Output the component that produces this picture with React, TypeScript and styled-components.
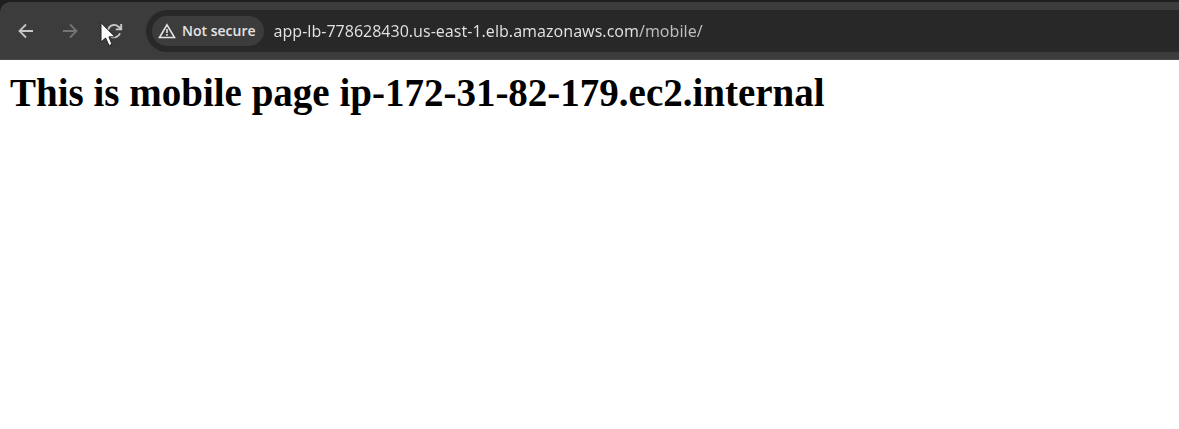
import React from "react";
import styled, { createGlobalStyle } from "styled-components";

const GlobalStyle = createGlobalStyle`
  * { box-sizing: border-box; }
  body { margin: 0; background: #fff; }
`;

const Browser = styled.div`
  min-height: 100vh;
  background: #fff;
`;

const Frame = styled.header`
  padding-top: 2px;
  background: #1f1f1f;
`;

const Toolbar = styled.div`
  display: flex;
  align-items: center;
  height: 58px;
  padding: 8px 0 8px 10px;
  background: #3c3c3c;
  border-bottom: 1px solid #4a4a4a;
  border-top-left-radius: 10px;
`;

const Navigation = styled.nav`
  display: flex;
  gap: 12px;
  margin-right: 16px;
`;

const NavButton = styled.button`
  position: relative;
  display: grid;
  place-items: center;
  width: 32px;
  height: 32px;
  padding: 0;
  border: 0;
  border-radius: 16px;
  background: transparent;
  color: #c7c7c7;

  &:disabled {
    color: #757575;
  }
`;

const Cursor = styled.svg`
  position: absolute;
  left: 2px;
  top: 7px;
`;

const AddressBar = styled.div`
  flex: 1;
  display: flex;
  align-items: center;
  gap: 10px;
  min-width: 0;
  height: 42px;
  padding-left: 6px;
  background: #282828;
  border-radius: 21px 0 0 21px;
`;

const SecurityChip = styled.button`
  flex: none;
  display: flex;
  align-items: center;
  gap: 6px;
  height: 30px;
  padding: 0 8px 0 6px;
  border: 0;
  border-radius: 15px;
  background: #3c3c3c;
  color: #e3e3e3;
  font: 600 14px/20px "Open Sans", "Noto Sans", sans-serif;
`;

const AddressInput = styled.input`
  flex: 1;
  min-width: 0;
  height: 30px;
  padding: 0;
  border: 0;
  outline: 0;
  color: #e3e3e3;
  font: 400 16px/24px "Noto Sans", "Open Sans", sans-serif;
  background: linear-gradient(to right, #e3e3e3 365px, #c0c0c0 365px);
  background-clip: text;
  -webkit-background-clip: text;
  -webkit-text-fill-color: transparent;
`;

const Page = styled.main`
  padding: 10px;
`;

const Heading = styled.h1`
  margin: 0;
  color: #000;
  font: 700 39px/46px "Liberation Serif", serif;
`;

const App: React.FC = () => (
  <Browser>
    <GlobalStyle />
    <Frame>
      <Toolbar>
        <Navigation aria-label="Browser navigation">
          <NavButton type="button" aria-label="Back">
            <svg width="16" height="16" viewBox="0 0 16 16" fill="none" stroke="currentColor" strokeWidth="1.8">
              <path d="M15 8H2M8 1.5 1.5 8 8 14.5" />
            </svg>
          </NavButton>
          <NavButton type="button" aria-label="Forward" disabled>
            <svg width="16" height="16" viewBox="0 0 16 16" fill="none" stroke="currentColor" strokeWidth="1.8">
              <path d="M1 8H14M8 1.5 14.5 8 8 14.5" />
            </svg>
          </NavButton>
          <NavButton type="button" aria-label="Reload">
            <svg width="18" height="18" viewBox="0 0 18 18" fill="none" stroke="currentColor" strokeWidth="1.9">
              <path d="M15 11.2A6.2 6.2 0 1 1 13.6 4.8L16 7M16.2 2V7.4H10.8" />
            </svg>
            <Cursor width="17" height="25" viewBox="0 0 17 25" aria-hidden="true">
              <path
                d="M1 .8V20L5.6 16 9 23.6 12 22.3 8.9 14.8H15Z"
                fill="#fff"
                stroke="#222"
                strokeWidth="1"
              />
            </Cursor>
          </NavButton>
        </Navigation>
        <AddressBar>
          <SecurityChip type="button">
            <svg width="18" height="16" viewBox="0 0 18 16" fill="none" stroke="currentColor" strokeWidth="1.6">
              <path d="M9 1.8 16.5 14.5H1.5ZM9 6V10M9 11V12.8" />
            </svg>
            Not secure
          </SecurityChip>
          <AddressInput
            type="text"
            aria-label="Address"
            spellCheck={false}
            defaultValue="app-lb-778628430.us-east-1.elb.amazonaws.com/mobile/"
          />
        </AddressBar>
      </Toolbar>
    </Frame>
    <Page>
      <Heading>This is mobile page ip-172-31-82-179.ec2.internal</Heading>
    </Page>
  </Browser>
);

export default App;
